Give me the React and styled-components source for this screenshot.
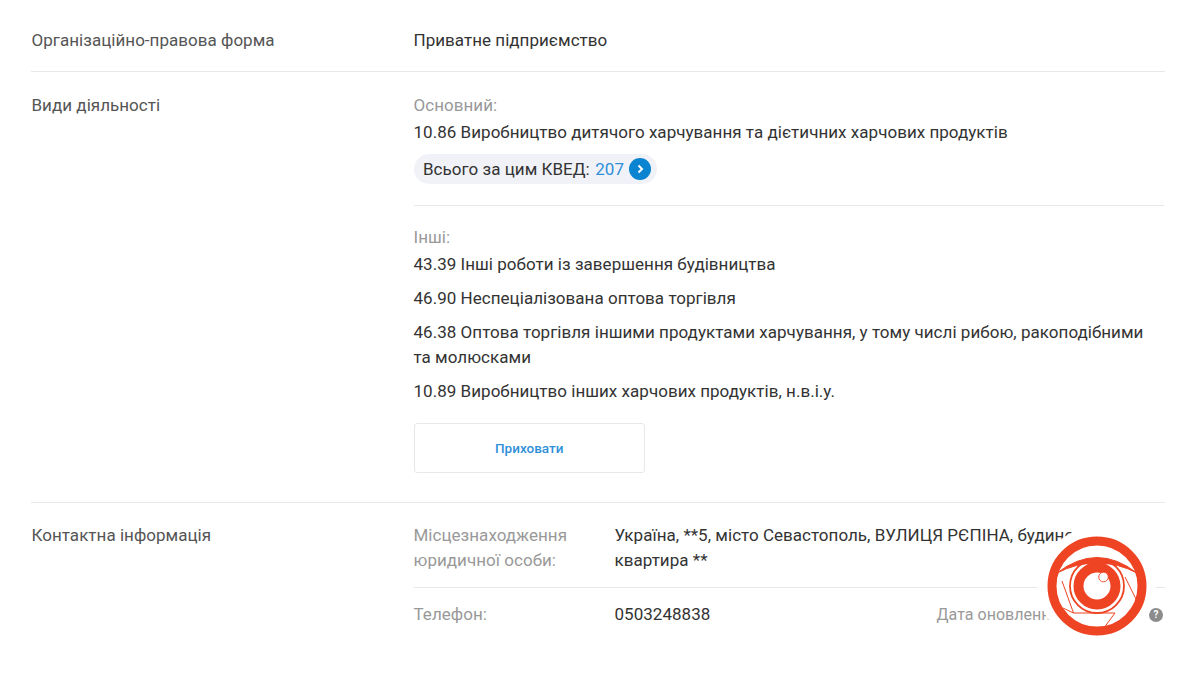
import React from 'react';
import styled, { createGlobalStyle } from 'styled-components';

const GlobalStyle = createGlobalStyle`
  html, body {
    margin: 0;
    background: #fff;
    font-family: Roboto, "Liberation Sans", sans-serif;
    letter-spacing: 0.03px;
    color: #333;
    overflow: hidden;
  }
`;

const Page = styled.div`
  position: relative;
  width: 1200px;
  height: 675px;
  padding: 0 35px 0 31px;
  box-sizing: border-box;
  overflow: hidden;
`;

const Row = styled.section`
  display: grid;
  grid-template-columns: 382.5px 1fr;
  border-bottom: ${p => (p.$last ? 'none' : '1px solid #e8e8e8')};
  padding: ${p => p.$pad};
`;

const Label = styled.div`
  padding-left: 0.5px;
  font-size: 17px;
  line-height: 25px;
  color: #555;
`;

const Value = styled.div`
  font-size: 17px;
  line-height: 25px;
  color: #333;
`;

const Muted = styled.div`
  font-size: 17px;
  line-height: 25px;
  color: #999;
`;

const Activity = styled.div`
  padding-right: 12px;
  font-size: 17px;
  line-height: 25px;
  color: #333;
  margin-top: ${p => p.$top || 0}px;
`;

const Pill = styled.div`
  display: flex;
  align-items: center;
  width: fit-content;
  height: 30px;
  margin-top: 9px;
  padding: 0 6px 0 9.5px;
  border-radius: 15px;
  background: #f0f2f7;
  font-size: 17px;
  color: #333;
`;

const Count = styled.span`
  color: #2f8fd8;
  margin-left: 5.5px;
`;

const RoundBtn = styled.span`
  display: flex;
  align-items: center;
  justify-content: center;
  width: 22px;
  height: 22px;
  margin-left: 5px;
  border-radius: 50%;
  background: #0a84d0;
`;

const Divider = styled.div`
  height: 1px;
  background: #e8e8e8;
  margin: ${p => p.$margin};
`;

const HideButton = styled.button`
  display: block;
  width: 231.5px;
  height: 50px;
  margin-top: 19px;
  border: 1px solid #e8e8e8;
  border-radius: 3px;
  background: #fff;
  color: #2f8fd8;
  font-family: inherit;
  font-size: 13.5px;
  font-weight: 500;
`;

const ContactRow = styled.div`
  display: grid;
  grid-template-columns: 201px 322px 1fr;
  align-items: ${p => p.$align || 'start'};
`;

const Address = styled.div`
  grid-column: 2 / 4;
  font-size: 17px;
  line-height: 25px;
  color: #333;
`;

const Updated = styled.div`
  display: flex;
  align-items: center;
  justify-content: space-between;
  font-size: 16px;
  color: #999;
`;

const Help = styled.span`
  display: flex;
  align-items: center;
  justify-content: center;
  width: 14px;
  height: 14px;
  margin-right: 2px;
  border-radius: 50%;
  background: #8c8c8c;
  color: #fff;
  font-size: 10px;
  font-weight: 700;
`;

const Watermark = styled.svg`
  position: absolute;
  left: 1038px;
  top: 527px;
`;

function Eye() {
  return (
    <Watermark width="118" height="118" viewBox="0 0 118 118" fill="none">
      <circle cx="59" cy="59" r="59" fill="#fff" />
      <circle cx="59" cy="59" r="45" stroke="#ee4423" strokeWidth="9" />
      {/* upper lid */}
      <path d="M19 46 Q59 15 99 46 Q80 36 59 36 Q38 36 19 46 Z" fill="#ee4423" stroke="#ee4423" strokeWidth="1" />
      {/* iris: thin outer ring, gap, thick ring */}
      <circle cx="59" cy="59" r="27" stroke="#ee4423" strokeWidth="1.8" />
      <circle cx="59" cy="59" r="18.5" stroke="#ee4423" strokeWidth="10" />
      <path d="M48 36 A25 25 0 0 1 70 36" stroke="#ee4423" strokeWidth="4" />
      <circle cx="65.5" cy="50" r="4.8" fill="#fff" stroke="#ee4423" strokeWidth="0.9" />
      {/* aperture lines */}
      <path d="M24 54 L35.5 86 L77 86 L67 99.5 M87 50 L98.5 73 M25 81 L35.5 86" stroke="#ee4423" strokeWidth="1" />
    </Watermark>
  );
}

export default function App() {
  return (
    <Page>
      <GlobalStyle />
      <Row $pad="28px 0 18px">
        <Label>Організаційно-правова форма</Label>
        <Value>Приватне підприємство</Value>
      </Row>
      <Row $pad="21px 0 29px">
        <Label>Види діяльності</Label>
        <div>
          <Muted>Основний:</Muted>
          <Activity $top={2}>10.86 Виробництво дитячого харчування та дієтичних харчових продуктів</Activity>
          <Pill>
            Всього за цим КВЕД: <Count>207</Count>
            <RoundBtn>
              <svg width="10" height="10" viewBox="0 0 10 10" fill="none">
                <path d="M3.5 1.5 L7 5 L3.5 8.5" stroke="#fff" strokeWidth="2" />
              </svg>
            </RoundBtn>
          </Pill>
          <Divider $margin="21px 1px 19px 0" />
          <Muted>Інші:</Muted>
          <Activity $top={2}>43.39 Інші роботи із завершення будівництва</Activity>
          <Activity $top={9}>46.90 Неспеціалізована оптова торгівля</Activity>
          <Activity $top={9}>46.38 Оптова торгівля іншими продуктами харчування, у тому числі рибою, ракоподібними та молюсками</Activity>
          <Activity $top={9}>10.89 Виробництво інших харчових продуктів, н.в.і.у.</Activity>
          <HideButton>Приховати</HideButton>
        </div>
      </Row>
      <Row $pad="20px 0 0" $last>
        <Label>Контактна інформація</Label>
        <div>
          <ContactRow>
            <Muted>Місцезнаходження<br />юридичної особи:</Muted>
            <Address>Україна, **5, місто Севастополь, ВУЛИЦЯ РЄПІНА, будинок **й,<br />квартира **</Address>
          </ContactRow>
          <Divider $margin="14px 0" />
          <ContactRow $align="center">
            <Muted>Телефон:</Muted>
            <Value>0503248838</Value>
            <Updated>Дата оновлення: 2021 <Help>?</Help></Updated>
          </ContactRow>
        </div>
      </Row>
      <Eye />
    </Page>
  );
}
